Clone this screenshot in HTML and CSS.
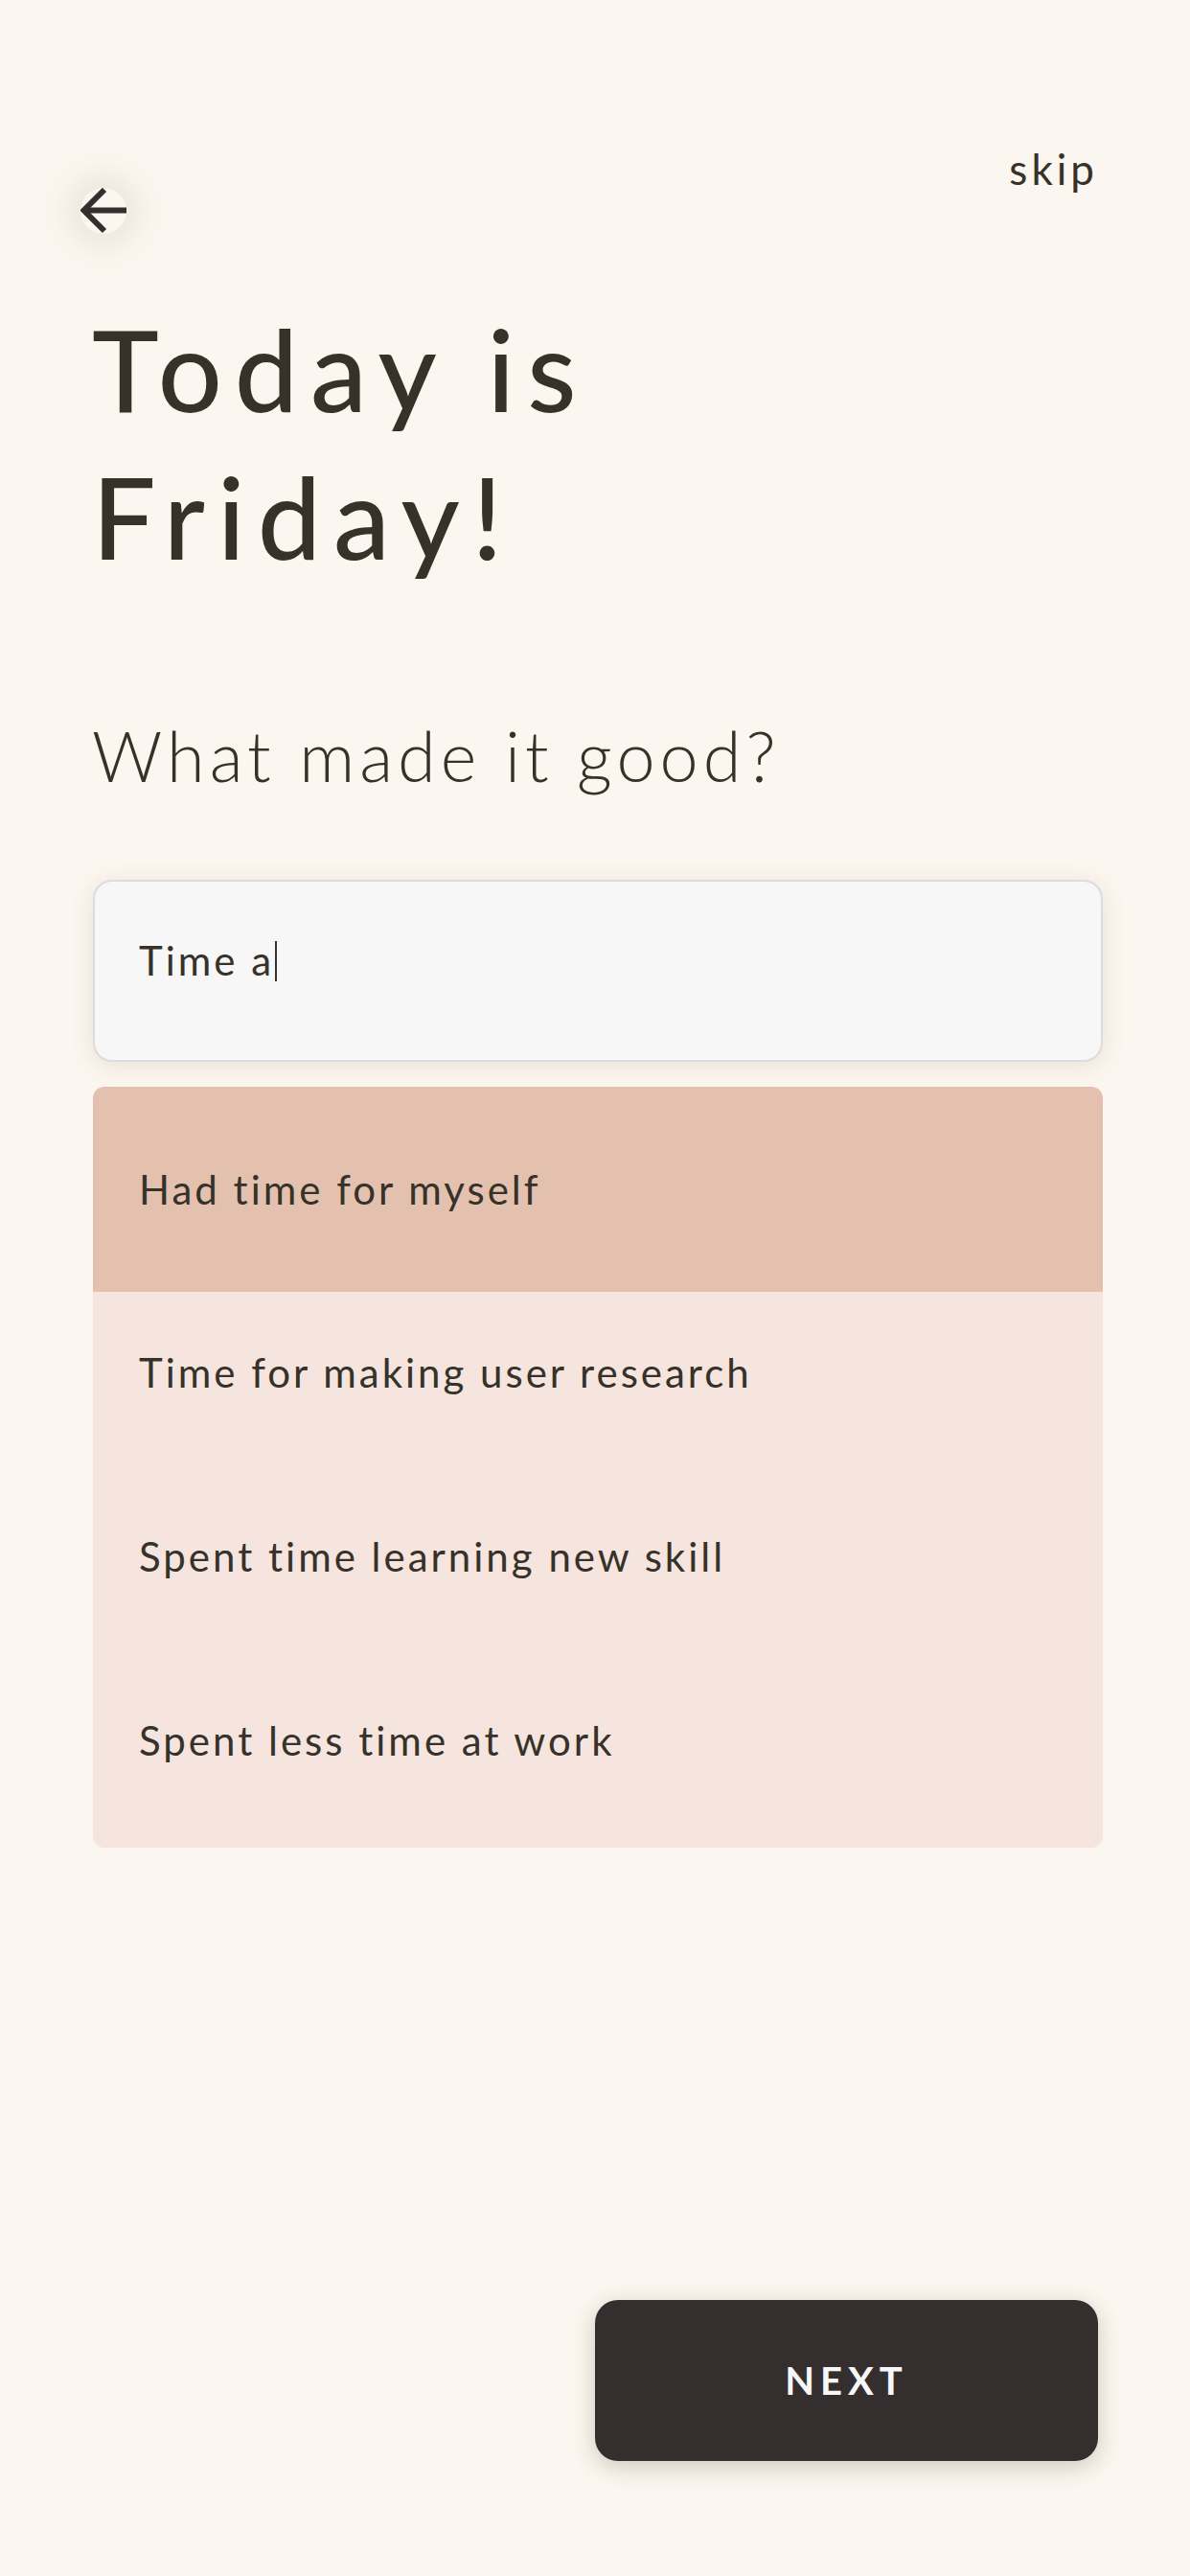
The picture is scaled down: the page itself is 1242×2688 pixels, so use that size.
FILE: index.html
```html
<!DOCTYPE html>
<html lang="en">
<head>
<meta charset="utf-8">
<title>Today is Friday</title>
<link rel="stylesheet" href="styles.css">
</head>
<body>
<div class="screen">
  <div class="topbar">
    <button class="back" aria-label="Back">
      <svg width="48" height="48" viewBox="0 0 48 48" fill="none" stroke="#352e2e" stroke-width="6" stroke-linecap="butt" stroke-linejoin="miter">
        <path d="M48 23.5 H4"/>
        <path d="M25 2 L3.5 23.5 L25 45"/>
      </svg>
    </button>
    <span class="skip">skip</span>
  </div>
  <h1 class="title">Today is<br>Friday!</h1>
  <h2 class="question">What made it good?</h2>
  <div class="input"><span class="typed">Time a</span><span class="caret"></span></div>
  <ul class="suggestions">
    <li class="item active">Had time for myself</li>
    <li class="item">Time for making user research</li>
    <li class="item">Spent time learning new skill</li>
    <li class="item">Spent less time at work</li>
  </ul>
  <div class="spacer"></div>
  <div class="actions">
    <button class="next">NEXT</button>
  </div>
</div>
</body>
</html>
```
FILE: styles.css
```css
* { box-sizing: border-box; }
html, body { margin: 0; padding: 0; }
body {
  background: #fbf6ef;
  font-family: "Lato", "Open Sans", sans-serif;
  color: #36322a;
}
.screen {
  width: 1242px;
  height: 2688px;
  display: flex;
  flex-direction: column;
}
.topbar {
  display: flex;
  justify-content: space-between;
  align-items: flex-start;
  padding: 150px 96px 0 84px;
  height: 300px;
}
.back {
  margin-top: 46px;
  width: 48px;
  height: 48px;
  padding: 0;
  border: none;
  background: transparent;
  border-radius: 50%;
  box-shadow: 0 0 30px 14px rgba(120, 100, 80, 0.10);
  display: flex;
}
.skip {
  font-size: 44px;
  line-height: 52px;
  color: #36322a;
  letter-spacing: 4px;
}
.title {
  margin: 8px 0 0 96px;
  font-size: 118px;
  line-height: 154px;
  font-weight: 500;
  letter-spacing: 13px;
  color: #36322a;
}
.question {
  margin: 127px 0 0 96px;
  font-size: 72px;
  line-height: 90px;
  font-weight: 300;
  letter-spacing: 5px;
  color: #36322a;
}
.input {
  margin: 85px 0 0 97px;
  width: 1054px;
  height: 190px;
  background: #f7f7f7;
  border: 2px solid #dcdcdc;
  border-radius: 20px;
  box-shadow: 0 4px 24px rgba(120, 100, 80, 0.14);
  padding: 56px 0 0 46px;
  display: flex;
  align-items: flex-start;
  font-size: 42px;
  line-height: 52px;
  letter-spacing: 3px;
  color: #36322a;
}
.caret {
  display: inline-block;
  width: 2px;
  height: 42px;
  margin: 6px 0 0 1px;
  background: #36322a;
}
.suggestions {
  list-style: none;
  margin: 26px 0 0 97px;
  padding: 0 0 4px 0;
  width: 1054px;
  background: #f5e5de;
  border-radius: 12px;
  overflow: hidden;
}
.item {
  height: 192px;
  padding: 0 0 24px 48px;
  display: flex;
  align-items: center;
  font-size: 42px;
  font-weight: 400;
  letter-spacing: 3px;
  color: #36322a;
}
.item.active {
  height: 214px;
  padding-bottom: 0;
  background: #e4c1ae;
}
.spacer { flex: 1; }
.actions {
  display: flex;
  justify-content: flex-end;
  padding: 0 96px 120px 0;
}
.next {
  width: 525px;
  height: 168px;
  border: none;
  border-radius: 24px;
  background: #352e2e;
  color: #f7f7f7;
  font-family: "Lato", sans-serif;
  font-size: 40px;
  font-weight: 700;
  letter-spacing: 6px;
  padding-left: 6px;
  box-shadow: 0 6px 24px rgba(60, 40, 20, 0.22);
}
```
